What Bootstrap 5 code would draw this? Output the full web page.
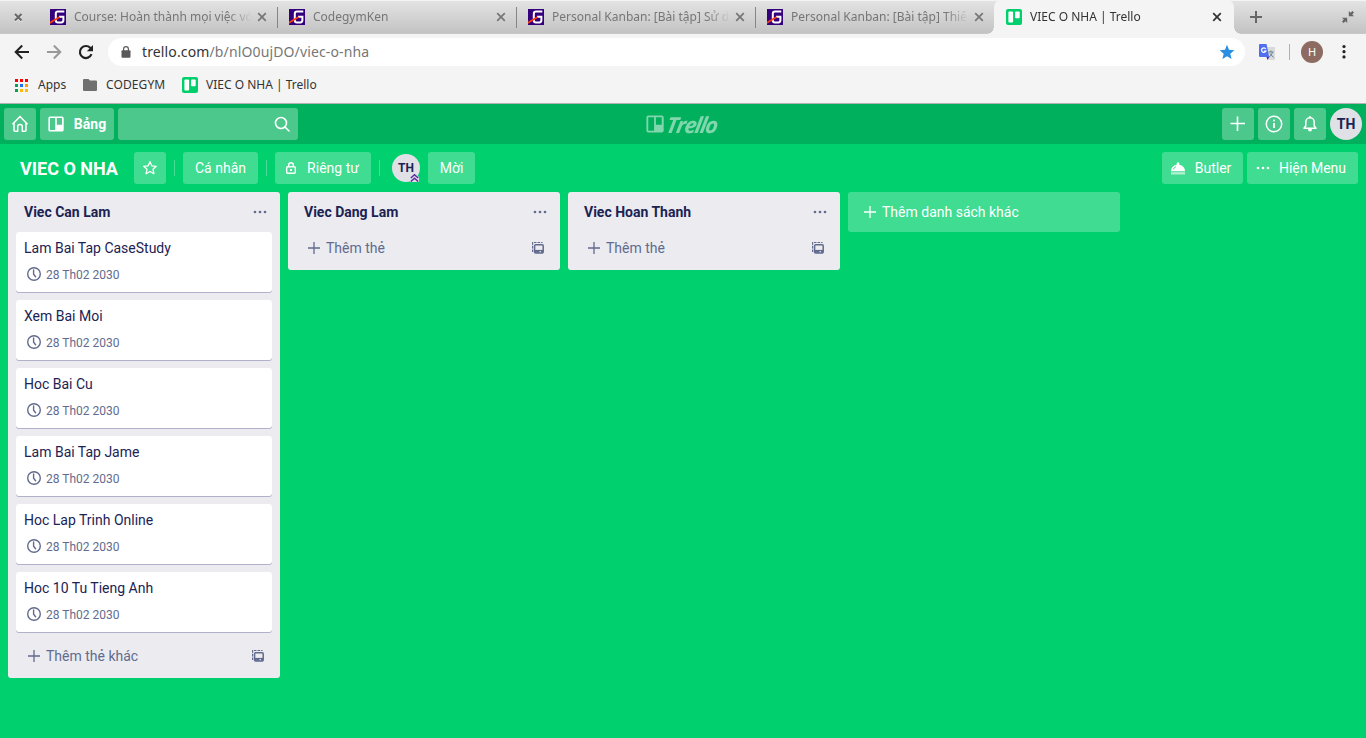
<!DOCTYPE html>
<html lang="vi">
<head>
<meta charset="utf-8">
<meta name="viewport" content="width=device-width, initial-scale=1">
<title>VIEC O NHA | Trello</title>
<link rel="stylesheet" href="https://cdn.jsdelivr.net/npm/bootstrap@5.3.0/dist/css/bootstrap.min.css">
<style>
  body { width: 1366px; height: 738px; overflow: hidden; background: #00d06d; font: 14px/20px Roboto, sans-serif; color: #172b4d; --navy: #1b2353; --muted: #626b8e; }
  svg { display: block; flex: none; }
  .chrome { background: #f4f4f4; font-family: "Noto Sans", sans-serif; font-size: 12px; color: #333; height: 104px; border-bottom: 1px solid #b3b1b3; }
  .tabstrip { height: 34px; background: linear-gradient(#f4f4f4 0 1px, #e3e3e3 1px, #c3c3c3 33px, #c8c8c8 33px); color: #767676; padding-left: 38px; }
  .window-x { left: 13px; top: 12px; }
  .tab { width: 239px; height: 34px; padding: 0 10px 0 12px; position: relative; }
  .tab + .tab:not(.on)::before { content: ""; position: absolute; left: 0; top: 7px; width: 1px; height: 21px; background: #858585; }
  .tab-title { flex: 1; margin-left: 8px; overflow: hidden; white-space: nowrap; -webkit-mask-image: linear-gradient(90deg, #000 154px, transparent 178px); mask-image: linear-gradient(90deg, #000 154px, transparent 178px); }
  .tab.on { width: 240px; padding-right: 12px; background: #f4f4f4; border-radius: 7px 7px 0 0; color: #333; }
  .tab.on::before, .tab.on::after { content: ""; position: absolute; bottom: 0; width: 7px; height: 7px; }
  .tab.on::before { left: -7px; background: radial-gradient(circle at 0 0, transparent 6.5px, #f4f4f4 7px); }
  .tab.on::after { right: -7px; background: radial-gradient(circle at 100% 0, transparent 6.5px, #f4f4f4 7px); }
  .toolbar { height: 36px; padding: 0 14px 0 14px; }
  .omnibox { height: 28px; width: 1137px; flex: none; border-radius: 14px; background: #fff; font-size: 14px; margin-left: 10px; padding: 0 10px 0 9px; letter-spacing: .13px; }
  .omnibox .path { color: #777; }
  .divider { width: 1px; height: 16px; background: #b0b0b0; }
  .profile { width: 22px; height: 22px; border-radius: 50%; background: #8d6b61; color: #fff; font-size: 11px; margin-left: 11px; }
  .marks { height: 30px; padding: 0 15px; }
  .topbar { height: 40px; background: #00b05c; padding: 0 4px; position: relative; color: #fff; }
  .tb { height: 32px; min-width: 32px; border: 0; border-radius: 3px; background: rgba(255,255,255,.3); color: #fff; padding: 0; display: flex; align-items: center; justify-content: center; }
  .search { width: 180px; padding-right: 8px; justify-content: flex-end; }
  .logo { left: 646px; top: 10px; opacity: .5; height: 20px; }
  .logo-word { font: italic 700 22px/20px "Open Sans", sans-serif; letter-spacing: -1.3px; transform: skewX(-10deg) scaleX(.98); transform-origin: 0 50%; margin-left: 3px; }
  .avatar { width: 32px; height: 32px; border-radius: 50%; background: #dfe1e6; color: var(--navy); font-weight: 700; display: flex; align-items: center; justify-content: center; position: relative; }
  .boardbar { height: 48px; padding: 0 8px 0 20px; color: #fff; }
  .boardbar .tb { background: rgba(255,255,255,.25); font-size: 14px; line-height: 20px; }
  .board-name { font-size: 18px; line-height: 24px; font-weight: 700; margin: 2px 16px 0 0; width: 98px; white-space: nowrap; }
  .sep { width: 1px; height: 16px; background: rgba(255,255,255,.28); margin: 0 8px; }
  .avatar.sm { width: 28px; height: 28px; font-size: 12px; }
  .admin { right: 1px; bottom: 0; }
  .lists { padding: 0 8px; }
  .klist { width: 272px; background: #ebebf0; border-radius: 3px; padding-bottom: 6px; color: var(--navy); }
  .klist h2 { font-size: 14px; line-height: 20px; font-weight: 700; margin: 0; }
  .klist header { height: 40px; padding: 0 12px 0 16px; color: var(--navy); }
  .kcards { padding: 0 8px; gap: 8px; }
  .kcard { height: 60px; background: #fff; border-radius: 3px; box-shadow: 0 1px 0 #b0b1c8; padding: 6px 8px 0; }
  .due { font-size: 12px; line-height: 20px; color: var(--muted); margin-top: 7px; padding-left: 2px; gap: 4px; }
  .due svg { position: relative; top: -1px; }
  .muted { color: var(--muted); }
  .adder { height: 32px; padding: 0 15px 0 18px; color: var(--muted); }
  .kcards + .adder { margin-top: 8px; }
  .addlist { width: 272px; height: 40px; border-radius: 3px; background: rgba(255,255,255,.25); color: #fff; padding-left: 14px; }
</style>
</head>
<body>
<svg width="0" height="0" class="position-absolute">
  <symbol id="x" viewBox="0 0 10 10"><path d="M1.2 1.2l7.6 7.6M8.8 1.2L1.2 8.8" stroke="currentColor" stroke-width="1.7"/></symbol>
  <symbol id="gym" viewBox="0 0 16 16"><path fill="#34007c" d="M0 0h16v16H0z"/><path d="M14.300 2.500H8Q5.800 2.500 5.800 4.700v6.500q0 2.200 2.200 2.200h3.300q2.100 0 2.100-2.100V7.700H9" fill="none" stroke="#fff" stroke-width="2"/><path d="M0 12.800L9.200 7.200l.8 1.500L0 14.700z" fill="#ff3d10"/></symbol>
  <symbol id="tre" viewBox="0 0 16 16"><rect width="16" height="16" rx="2" fill="#00d06c"/><rect x="2.4" y="2.5" width="4.7" height="11" rx="1" fill="#fff"/><rect x="9" y="2.5" width="4.7" height="6.8" rx="1" fill="#fff"/></symbol>
  <symbol id="dots" viewBox="0 0 14 4"><g fill="currentColor"><circle cx="2" cy="2" r="1.35"/><circle cx="7" cy="2" r="1.35"/><circle cx="12" cy="2" r="1.35"/></g></symbol>
  <symbol id="plus" viewBox="0 0 12 12"><path d="M6 0v12M0 6h12" stroke="currentColor" stroke-width="1.3"/></symbol>
  <symbol id="clock" viewBox="0 0 16 16"><g fill="none" stroke="currentColor" stroke-width="1.4"><circle cx="8" cy="8" r="6.3"/><path d="M7.6 4v4.2l2 2.5" stroke-linecap="round"/></g></symbol>
  <symbol id="tpl" viewBox="0 0 14 14"><g fill="none" stroke="currentColor"><path d="M1.600 11V1.500H11.500" stroke-width="1.200" stroke-dasharray="2.600 1"/><rect x="3.600" y="3.800" width="8.600" height="8.200" rx="1" stroke-width="1.500"/><path d="M3.500 9.500h9" stroke-width="1.200"/></g><path d="M3.500 9.700h5v2h-5zM10 9.700h2v2h-2z" fill="currentColor"/></symbol>
  <symbol id="brd" viewBox="0 0 16 16"><path fill="currentColor" fill-rule="evenodd" d="M2 .5h12A1.7 1.7 0 0 1 15.7 2v12a1.7 1.7 0 0 1-1.7 1.600H2A1.7 1.7 0 0 1 .4 14V2A1.600 1.600 0 0 1 2 .5zM2 2v12h5.200V2zM8.800 2v6.700H14V2z"/></symbol>
</svg>

<div class="chrome">
  <div class="tabstrip d-flex position-relative">
    <svg class="position-absolute window-x" width="10" height="11"><path d="M2 2l6.500 6.500M8.500 2L2 8.500" stroke="#fff" stroke-width="2" opacity=".6" transform="translate(0 1)"/><path d="M2 2l6.500 6.500M8.500 2L2 8.500" stroke="#666" stroke-width="2"/></svg>
    <div class="tab d-flex align-items-center"><svg width="16" height="16"><use href="#gym"/></svg><span class="tab-title">Course: Hoàn thành mọi việc với</span><svg width="10" height="10"><use href="#x"/></svg></div>
    <div class="tab d-flex align-items-center"><svg width="16" height="16"><use href="#gym"/></svg><span class="tab-title">CodegymKen</span><svg width="10" height="10"><use href="#x"/></svg></div>
    <div class="tab d-flex align-items-center"><svg width="16" height="16"><use href="#gym"/></svg><span class="tab-title">Personal Kanban: [Bài tập] Sử d</span><svg width="10" height="10"><use href="#x"/></svg></div>
    <div class="tab d-flex align-items-center"><svg width="16" height="16"><use href="#gym"/></svg><span class="tab-title">Personal Kanban: [Bài tập] Thiế</span><svg width="10" height="10"><use href="#x"/></svg></div>
    <div class="tab on d-flex align-items-center"><svg width="16" height="16"><use href="#tre"/></svg><span class="tab-title">VIEC O NHA | Trello</span><svg width="10" height="10"><use href="#x"/></svg></div>
    <div class="d-flex flex-fill align-items-center justify-content-between ps-3 pe-2">
      <svg width="12" height="12"><path d="M6 0v12M0 6h12" stroke="#666" stroke-width="2"/></svg>
      <svg class="me-1" width="12" height="12" viewBox="0 0 12 12" fill="#666"><path d="M6.800 0v5.200H12L10.200 3.500 12 1.500 10.500 0 8.500 1.800zM0 6.800h5.200V12L3.500 10.200 1.500 12 0 10.500 1.800 8.500z"/></svg>
    </div>
  </div>
  <div class="toolbar d-flex align-items-center">
    <svg width="16" height="16" fill="none" stroke="#222" stroke-width="2"><path d="M15 8H2M8.200 1.500L1.700 8l6.500 6.500"/></svg>
    <svg class="ms-3" width="16" height="16" fill="none" stroke="#999" stroke-width="2"><path d="M1 8h13M7.800 1.500L14.300 8l-6.500 6.500"/></svg>
    <svg class="ms-3 me-1" width="16" height="16" fill="none" stroke="#222" stroke-width="2.200"><path d="M13.500 10.200a6 6 0 1 1-1.300-6.400L13.600 5"/><path d="M15 1v6.200H8.800z" fill="#222" stroke="none"/></svg>
    <div class="omnibox d-flex align-items-center">
      <svg style="margin:0 11px 0 4px" width="10" height="12" viewBox="0 0 10 12"><rect x="0.500" y="4.300" width="9" height="7.400" rx="1" fill="#5a5a5a"/><path d="M2.600 5V3a2.400 2.400 0 0 1 4.800 0v2" fill="none" stroke="#5a5a5a" stroke-width="1.200"/></svg>
      <span>trello.com<span class="path">/b/nlO0ujDO/viec-o-nha</span></span>
      <svg class="ms-auto" width="16" height="16" viewBox="0 0 16 16"><path fill="#2a8fe0" d="M8 .8l2 5 5.400.4-4.100 3.500 1.300 5.300L8 12.200 3.400 15l1.300-5.300L.6 6.200 6 5.800z"/></svg>
    </div>
    <svg style="margin:0 14px" width="16" height="16" viewBox="0 0 16 16"><path d="M6 3h10v13H9z" fill="#d9dadb"/><path d="M9.500 8h5M12 6.500V8m-2 5c2-1 3-3 3.500-5M11 9.500l3.500 4" stroke="#6b838b" fill="none"/><path d="M1 0h6.500l2.700 13H1a1 1 0 0 1-1-1V1a1 1 0 0 1 1-1z" fill="#4f6ff0"/><path d="M7.500 13h2.700L8.500 16z" fill="#4224ad"/><path d="M6.800 4.800A2.300 2.300 0 1 0 7 7H4.800" stroke="#fff" stroke-width="1.200" fill="none"/></svg>
    <div class="divider"></div>
    <div class="profile d-flex align-items-center justify-content-center me-auto">H</div>
    <svg width="16" height="16" fill="#222"><circle cx="8" cy="2.500" r="1.600"/><circle cx="8" cy="7.700" r="1.600"/><circle cx="8" cy="12.900" r="1.600"/></svg>
  </div>
  <div class="marks d-flex align-items-center">
    <svg width="13" height="13"><path fill="#f00" d="M0 0h3v3H0zM5 0h3v3H5zM10 0h3v3h-3z"/><path fill="#0a9d58" d="M0 5h3v3H0zM0 10h3v3H0z"/><path fill="#1a73e8" d="M5 5h3v3H5z"/><path fill="#ff9d00" d="M10 5h3v3h-3z"/><path fill="#fbbc05" d="M5 10h3v3H5zM10 10h3v3h-3z"/></svg>
    <span style="margin-left:10px;width:45px">Apps</span>
    <svg width="14" height="12"><path fill="#707070" d="M1 0h4.500L7 1.500h6q1 0 1 1V11q0 1-1 1H1q-1 0-1-1V1q0-1 1-1z"/></svg>
    <span style="margin-left:9px;width:76px;letter-spacing:.1px">CODEGYM</span>
    <svg width="16" height="16"><use href="#tre"/></svg>
    <span class="ms-2">VIEC O NHA | Trello</span>
  </div>
</div>

<nav class="topbar d-flex align-items-center gap-1">
  <button class="tb"><svg width="18" height="18" viewBox="0 0 18 18" fill="none" stroke="#fff" stroke-width="1.500" stroke-linejoin="round"><path d="M1.500 9.200L9 1.400l7.500 7.800M3 8v7.200q0 1 1 1h2.700v-4.700Q6.700 9.500 9 9.500t2.300 2v4.700H14q1 0 1-1V8"/></svg></button>
  <button class="tb fw-bold" style="width:74px;font-size:14px"><svg width="16" height="16"><use href="#brd"/></svg><span style="margin-left:10px">Bảng</span></button>
  <div class="tb search"><svg width="16" height="16" fill="none" stroke="#fff" stroke-width="1.600"><circle cx="7" cy="7" r="5.500"/><path d="M11 11l4 4" stroke-linecap="round"/></svg></div>
  <div class="logo d-flex align-items-center position-absolute"><svg width="18" height="18"><use href="#brd"/></svg><span class="logo-word">Trello</span></div>
  <button class="tb ms-auto"><svg width="16" height="16"><path d="M7.500 .5v14.500M.5 7.500h14.500" stroke="#fff" stroke-width="1.600"/></svg></button>
  <button class="tb"><svg width="18" height="18" fill="none" stroke="#fff" stroke-width="1.500"><circle cx="9" cy="9" r="7.700"/><path d="M9 8v5" stroke-width="1.800"/><circle cx="9" cy="5.500" r="1" fill="#fff" stroke="none"/></svg></button>
  <button class="tb"><svg width="16" height="18" fill="none" stroke="#fff" stroke-width="1.500" stroke-linejoin="round"><path d="M2 13.300l1.800-2.500V7a4.200 4.200 0 0 1 8.400 0v3.800l1.800 2.500zM8 2.800V1"/><path d="M6 14q0 2.500 2 2.500t2-2.500z" fill="#fff" stroke="none"/></svg></button>
  <div class="avatar">TH</div>
</nav>

<div class="boardbar d-flex align-items-center">
  <h1 class="board-name">VIEC O NHA</h1>
  <button class="tb"><svg width="16" height="16" viewBox="0 0 16 16"><path fill="none" stroke="#fff" stroke-width="1.300" stroke-linejoin="round" d="M8 1.700l1.800 4.100 4.500.5-3.300 3 .9 4.400L8 11.500l-3.900 2.200.9-4.400-3.300-3 4.500-.5z"/></svg></button>
  <span class="sep"></span>
  <button class="tb" style="width:75px">Cá nhân</button>
  <span class="sep"></span>
  <button class="tb" style="width:96px;padding-right:2px"><svg width="12" height="14" fill="none" stroke="#fff" stroke-width="1.400"><rect x="1.700" y="5.700" width="8.600" height="6.600" rx="1"/><path d="M3.700 5.500V4a2.300 2.300 0 0 1 4.600 0v1.500"/><path d="M5 8h2v2H5z" fill="#fff" stroke="none"/></svg><span style="margin-left:10px">Riêng tư</span></button>
  <span class="sep"></span>
  <div class="avatar sm ms-1 me-2">TH<svg class="position-absolute admin" width="9" height="9"><path d="M0 9L0 5 4.500 0 9 4v5z" fill="#dfe1e6"/><path d="M.8 5L4.500 1.800 8.200 5M.8 8.500l3.700-3.200 3.700 3.200" fill="none" stroke="#5b2ca0" stroke-width="1.500"/></svg></div>
  <button class="tb" style="width:47px">Mời</button>
  <button class="tb ms-auto me-1" style="width:81px;padding-right:3px"><svg width="14" height="13" fill="#fff"><path d="M0 9.200a7 6.800 0 0 1 5.700-6.500V1q1.300-1.500 2.600 0v1.700A7 6.800 0 0 1 14 9.200z"/><path d="M0 10.200h14V12.500H0z" opacity=".6"/><path d="M2.300 7.500Q3 5.500 5 4.600" fill="none" stroke="#40dc92"/></svg><span style="margin-left:10px">Butler</span></button>
  <button class="tb" style="width:111px;padding-right:3px"><svg width="14" height="4"><use href="#dots"/></svg><span style="margin-left:9px">Hiện Menu</span></button>
</div>

<main class="lists d-flex align-items-start gap-2">
  <section class="klist">
    <header class="d-flex align-items-center justify-content-between"><h2>Viec Can Lam</h2><svg class="muted" width="16" height="4"><use href="#dots"/></svg></header>
    <div class="kcards d-flex flex-column">
      <article class="kcard"><div>Lam Bai Tap CaseStudy</div><div class="due d-flex align-items-center"><svg width="16" height="16"><use href="#clock"/></svg>28 Th02 2030</div></article>
      <article class="kcard"><div>Xem Bai Moi</div><div class="due d-flex align-items-center"><svg width="16" height="16"><use href="#clock"/></svg>28 Th02 2030</div></article>
      <article class="kcard"><div>Hoc Bai Cu</div><div class="due d-flex align-items-center"><svg width="16" height="16"><use href="#clock"/></svg>28 Th02 2030</div></article>
      <article class="kcard"><div>Lam Bai Tap Jame</div><div class="due d-flex align-items-center"><svg width="16" height="16"><use href="#clock"/></svg>28 Th02 2030</div></article>
      <article class="kcard"><div>Hoc Lap Trinh Online</div><div class="due d-flex align-items-center"><svg width="16" height="16"><use href="#clock"/></svg>28 Th02 2030</div></article>
      <article class="kcard"><div>Hoc 10 Tu Tieng Anh</div><div class="due d-flex align-items-center"><svg width="16" height="16"><use href="#clock"/></svg>28 Th02 2030</div></article>
    </div>
    <div class="adder d-flex align-items-center"><svg width="16" height="12"><use href="#plus"/></svg><span class="ms-1">Thêm thẻ khác</span><svg class="ms-auto" width="14" height="14"><use href="#tpl"/></svg></div>
  </section>
  <section class="klist">
    <header class="d-flex align-items-center justify-content-between"><h2>Viec Dang Lam</h2><svg class="muted" width="16" height="4"><use href="#dots"/></svg></header>
    <div class="adder d-flex align-items-center"><svg width="16" height="12"><use href="#plus"/></svg><span class="ms-1">Thêm thẻ</span><svg class="ms-auto" width="14" height="14"><use href="#tpl"/></svg></div>
  </section>
  <section class="klist">
    <header class="d-flex align-items-center justify-content-between"><h2>Viec Hoan Thanh</h2><svg class="muted" width="16" height="4"><use href="#dots"/></svg></header>
    <div class="adder d-flex align-items-center"><svg width="16" height="12"><use href="#plus"/></svg><span class="ms-1">Thêm thẻ</span><svg class="ms-auto" width="14" height="14"><use href="#tpl"/></svg></div>
  </section>
  <div class="addlist d-flex align-items-center"><svg width="16" height="12"><use href="#plus"/></svg><span class="ms-1">Thêm danh sách khác</span></div>
</main>
<script src="https://cdn.jsdelivr.net/npm/bootstrap@5.3.0/dist/js/bootstrap.bundle.min.js"></script>
</body>
</html>
